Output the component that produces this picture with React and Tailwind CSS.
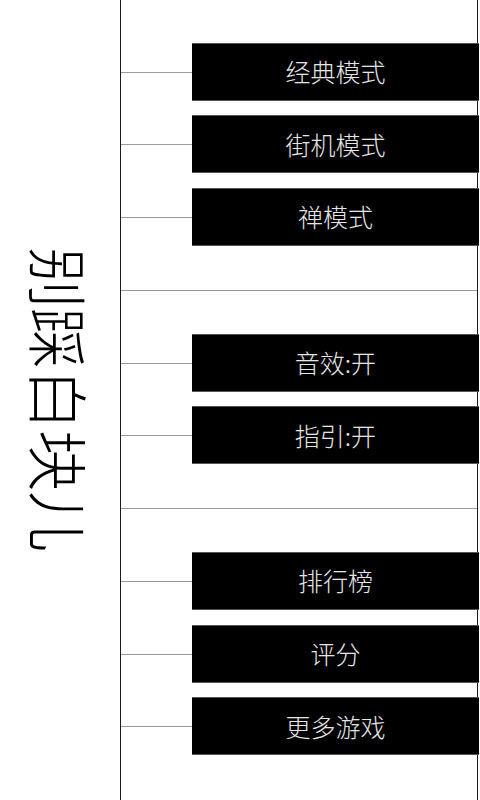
import React from "react";

const rows = [
  { key: "经典模式" },
  { key: "街机模式" },
  { key: "禅模式" },
  { key: null },
  { key: "音效:开" },
  { key: "指引:开" },
  { key: null },
  { key: "排行榜" },
  { key: "评分" },
  { key: "更多游戏" },
  { key: null },
];

function App() {
  return (
    <div
      className="flex h-[800px] w-[480px] bg-white"
      style={{ fontFamily: '"Noto Sans CJK SC", "Noto Sans", sans-serif' }}
    >
      <div className="flex w-[120px] items-center justify-center">
        <h1 className="text-[61px] font-light leading-none text-black [writing-mode:vertical-rl] [text-orientation:sideways]">
          别踩白块儿
        </h1>
      </div>

      <div className="grid w-[358px] grid-rows-11 border-x-[1.5px] border-[#1a1a1a]">
        {rows.map((row, i) => (
          <div
            key={i}
            className={
              "relative " + (i < rows.length - 1 ? "border-b border-[#9a9a9a]" : "")
            }
          >
            {row.key && (
              <button className="absolute bottom-[-29px] left-[71px] right-[-2px] z-10 flex h-[58px] items-center justify-center border-y border-[#555] bg-black text-[25px] font-light text-[#e6e6e6]">
                {row.key}
              </button>
            )}
          </div>
        ))}
      </div>
    </div>
  );
}

export default App;
